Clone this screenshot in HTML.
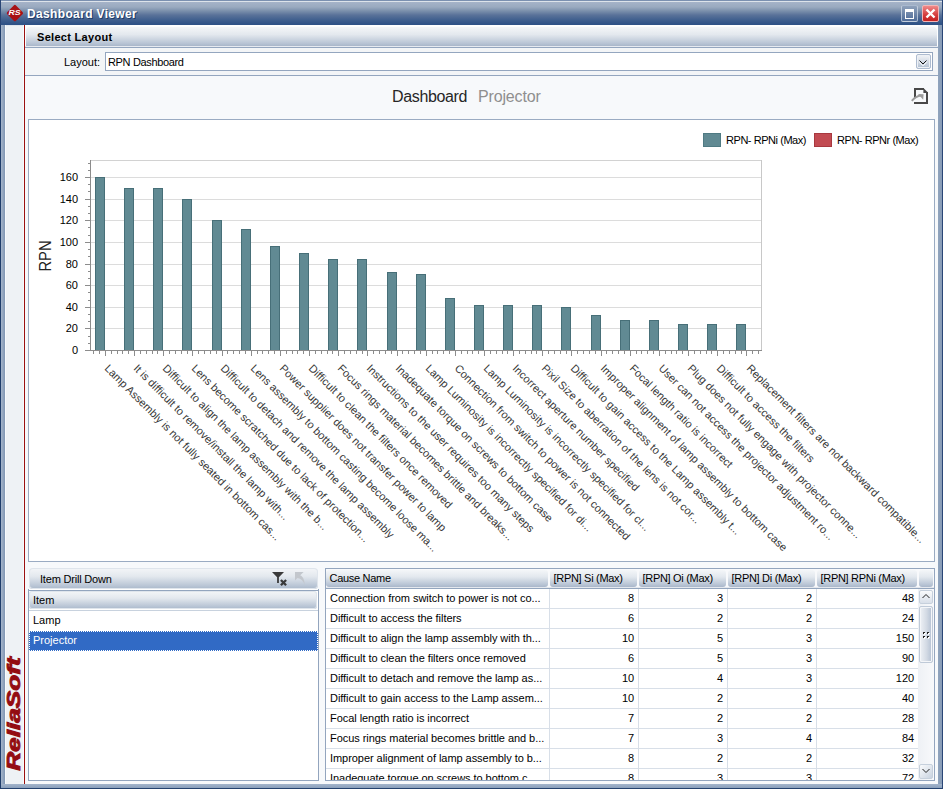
<!DOCTYPE html>
<html><head><meta charset="utf-8"><style>
html,body{margin:0;padding:0;}
body{width:943px;height:789px;position:relative;overflow:hidden;font-family:"Liberation Sans", sans-serif;}
.t{position:absolute;white-space:nowrap;font-size:11px;line-height:11px;color:#000;}
.lab{font-size:11px;line-height:13px;color:#383838;transform:rotate(45deg);transform-origin:0 0;}
</style></head><body>
<div style="position:absolute;left:0px;top:0px;width:943px;height:789px;background:#8ea2bd;"></div><div style="position:absolute;left:1px;top:0px;width:4px;height:789px;background:linear-gradient(90deg,#a6b6cb,#8096b3);"></div><div style="position:absolute;left:938px;top:0px;width:4px;height:789px;background:linear-gradient(90deg,#90a4bd,#889cb7);"></div><div style="position:absolute;left:0px;top:784px;width:943px;height:4px;background:linear-gradient(#a3b4ca,#8aa0bc);"></div><div style="position:absolute;left:0px;top:788px;width:943px;height:1px;background:#24426f;"></div><div style="position:absolute;left:0px;top:0px;width:1px;height:789px;background:#1f3d6b;"></div><div style="position:absolute;left:942px;top:0px;width:1px;height:789px;background:#2a4676;"></div><div style="position:absolute;left:0px;top:0px;width:943px;height:25px;background:linear-gradient(#7b90b0 0px,#7b90b0 1px,#dde3ea 1px,#dde3ea 2px,#a5b3c8 2px,#9aaac0 7px,#7a8fab 11px,#5a7299 15px,#3f5f8e 20px,#2f5286 24px);"></div><div style="position:absolute;left:0px;top:0px;width:1px;height:25px;background:#2a4676;"></div><div style="position:absolute;left:942px;top:0px;width:1px;height:25px;background:#2a4676;"></div><svg style="position:absolute;left:6px;top:4px" width="18" height="18" viewBox="0 0 18 18"><rect x="2.8" y="2.8" width="12.4" height="12.4" rx="1.6" fill="#a81215" transform="rotate(45 8.9 8.9)"/><text x="0" y="0" font-family="Liberation Sans" font-weight="bold" font-style="italic" font-size="6.6" fill="#fff" text-anchor="middle" transform="translate(8.6 11.3) scale(1.32 1)">RS</text></svg><div class="t" style="left:27px;top:7.84px;font-size:12px;line-height:12px;color:#fff;font-weight:bold;letter-spacing:0.35px;text-shadow:1px 1px 0 #203c68;">Dashboard Viewer</div><div style="position:absolute;left:901px;top:5px;width:15px;height:15px;border:1px solid rgba(230,236,244,0.6);border-radius:2px;background:linear-gradient(#8fa1bb,#4f6c98);"></div><div style="position:absolute;left:905px;top:9px;width:7px;height:6px;border:1px solid #fff;border-top-width:3px;"></div><div style="position:absolute;left:922px;top:5px;width:15px;height:15px;border:1px solid #f3b5b5;border-radius:2px;background:linear-gradient(#ee8a8a,#d43c3c 60%,#c42020);"></div><svg style="position:absolute;left:924px;top:7px" width="13" height="13" viewBox="0 0 13 13"><path d="M2.5 2.5 L10.5 10.5 M10.5 2.5 L2.5 10.5" stroke="#fff" stroke-width="2.4"/></svg><div style="position:absolute;left:5px;top:25px;width:19px;height:759px;background:#eef2f5;"></div><div style="position:absolute;left:5px;top:25px;width:19px;height:1px;background:#dfe6ee;"></div><div style="position:absolute;left:5px;top:25px;width:1px;height:759px;background:#f8fbfd;"></div><div style="position:absolute;left:23px;top:25px;width:1px;height:759px;background:#f8fbfd;"></div><div style="position:absolute;left:24px;top:25px;width:1px;height:759px;background:#9b1111;"></div><div class="t" style="left:-46px;top:704px;width:120px;height:20px;font-size:19px;line-height:20px;font-weight:bold;font-style:italic;color:#930c12;-webkit-text-stroke:0.9px #930c12;transform:rotate(-90deg) scale(1.38,1);transform-origin:60px 10px;text-align:center;letter-spacing:0px;">ReliaSoft</div><div style="position:absolute;left:25px;top:25px;width:913px;height:759px;background:#fdfeff;"></div><div style="position:absolute;left:26px;top:27px;width:911px;height:19px;border-radius:4px 4px 0 0;background:linear-gradient(#f4f6f8 0%,#e3e8ee 40%,#b9c5d5 85%,#a9b7ca 100%);"></div><div class="t" style="left:37px;top:31.69px;font-size:11px;line-height:11px;color:#000;font-weight:bold;letter-spacing:0.3px;">Select Layout</div><div style="position:absolute;left:25px;top:46px;width:913px;height:1px;background:#e6eaf0;"></div><div style="position:absolute;left:25px;top:47px;width:913px;height:1px;background:#94a6bf;"></div><div style="position:absolute;left:25px;top:48px;width:913px;height:27px;background:#f3f5f7;"></div><div style="position:absolute;left:25px;top:75px;width:913px;height:1px;background:#94a6bf;"></div><div class="t" style="left:64px;top:56.69px;font-size:11px;line-height:11px;color:#000;">Layout:</div><div style="position:absolute;left:105px;top:52px;width:826px;height:17px;border:1px solid #94a6bf;background:#fff;"></div><div class="t" style="left:108px;top:56.69px;font-size:11px;line-height:11px;color:#000;letter-spacing:-0.35px;">RPN Dashboard</div><div style="position:absolute;left:916px;top:54px;width:13px;height:13px;border:1px solid #aebcd0;border-radius:2px;box-shadow:inset 0 0 0 1px #eef1f5;background:linear-gradient(#f2f4f7,#d5dce6 50%,#b0bed0);"></div><svg style="position:absolute;left:918px;top:59px" width="10" height="8" viewBox="0 0 10 8"><path d="M1.5 2.5 L5 6 L8.5 2.5" stroke="#fff" stroke-width="1" fill="none" transform="translate(0,0.8)"/><path d="M1.5 1.5 L5 5 L8.5 1.5" stroke="#111" stroke-width="1" fill="none"/></svg><div style="position:absolute;left:25px;top:76px;width:913px;height:708px;background:#f7f9fb;"></div><div class="t" style="left:392px;top:88.66px;font-size:16px;line-height:16px;color:#262626;letter-spacing:-0.35px;">Dashboard</div><div class="t" style="left:478px;top:88.66px;font-size:16px;line-height:16px;color:#8f8f8f;letter-spacing:-0.15px;">Projector</div><svg style="position:absolute;left:906px;top:82px" width="28" height="26" viewBox="0 0 28 26" shape-rendering="crispEdges"><path d="M8 6h10v2h-10zM8 6h2v9.5h-2zM20 10h2v12h-2zM8 20h14v2h-14z" fill="#484848"/><path d="M17.4 6 L22 10.6 V11 H17.4 Z" fill="#484848" shape-rendering="auto"/><path d="M5.8 18.8 Q10 14.2 15 13.6" stroke="#9c9c9c" stroke-width="2" fill="none" shape-rendering="auto"/><path d="M12 12 L17.6 12.2 L17.2 17.8 Z" fill="#9c9c9c" shape-rendering="auto"/></svg><div style="position:absolute;left:28px;top:119px;width:905px;height:441px;border:1px solid #9aabc2;background:#fff;"></div><svg style="position:absolute;left:0;top:0" width="943" height="789" shape-rendering="crispEdges"><rect x="91" y="328" width="670" height="1" fill="#dcdcdc"/><rect x="91" y="307" width="670" height="1" fill="#dcdcdc"/><rect x="91" y="285" width="670" height="1" fill="#dcdcdc"/><rect x="91" y="264" width="670" height="1" fill="#dcdcdc"/><rect x="91" y="242" width="670" height="1" fill="#dcdcdc"/><rect x="91" y="220" width="670" height="1" fill="#dcdcdc"/><rect x="91" y="199" width="670" height="1" fill="#dcdcdc"/><rect x="91" y="177" width="670" height="1" fill="#dcdcdc"/><rect x="91" y="160" width="670" height="1" fill="#d2d2d2"/><rect x="761" y="160" width="1" height="190" fill="#c8c8c8"/><rect x="90" y="160" width="1" height="191" fill="#8c8c8c"/><rect x="85" y="350" width="677" height="1" fill="#8c8c8c"/><rect x="85" y="350" width="5" height="1" fill="#8c8c8c"/><rect x="85" y="328" width="5" height="1" fill="#8c8c8c"/><rect x="85" y="307" width="5" height="1" fill="#8c8c8c"/><rect x="85" y="285" width="5" height="1" fill="#8c8c8c"/><rect x="85" y="264" width="5" height="1" fill="#8c8c8c"/><rect x="85" y="242" width="5" height="1" fill="#8c8c8c"/><rect x="85" y="220" width="5" height="1" fill="#8c8c8c"/><rect x="85" y="199" width="5" height="1" fill="#8c8c8c"/><rect x="85" y="177" width="5" height="1" fill="#8c8c8c"/><rect x="88" y="343" width="2" height="1" fill="#8c8c8c"/><rect x="88" y="336" width="2" height="1" fill="#8c8c8c"/><rect x="88" y="321" width="2" height="1" fill="#8c8c8c"/><rect x="88" y="314" width="2" height="1" fill="#8c8c8c"/><rect x="88" y="300" width="2" height="1" fill="#8c8c8c"/><rect x="88" y="292" width="2" height="1" fill="#8c8c8c"/><rect x="88" y="278" width="2" height="1" fill="#8c8c8c"/><rect x="88" y="271" width="2" height="1" fill="#8c8c8c"/><rect x="88" y="256" width="2" height="1" fill="#8c8c8c"/><rect x="88" y="249" width="2" height="1" fill="#8c8c8c"/><rect x="88" y="235" width="2" height="1" fill="#8c8c8c"/><rect x="88" y="227" width="2" height="1" fill="#8c8c8c"/><rect x="88" y="213" width="2" height="1" fill="#8c8c8c"/><rect x="88" y="206" width="2" height="1" fill="#8c8c8c"/><rect x="88" y="191" width="2" height="1" fill="#8c8c8c"/><rect x="88" y="184" width="2" height="1" fill="#8c8c8c"/><rect x="88" y="170" width="2" height="1" fill="#8c8c8c"/><rect x="88" y="163" width="2" height="1" fill="#8c8c8c"/><rect x="105" y="351" width="1" height="5" fill="#8c8c8c"/><rect x="134" y="351" width="1" height="5" fill="#8c8c8c"/><rect x="163" y="351" width="1" height="5" fill="#8c8c8c"/><rect x="192" y="351" width="1" height="5" fill="#8c8c8c"/><rect x="222" y="351" width="1" height="5" fill="#8c8c8c"/><rect x="251" y="351" width="1" height="5" fill="#8c8c8c"/><rect x="280" y="351" width="1" height="5" fill="#8c8c8c"/><rect x="309" y="351" width="1" height="5" fill="#8c8c8c"/><rect x="338" y="351" width="1" height="5" fill="#8c8c8c"/><rect x="367" y="351" width="1" height="5" fill="#8c8c8c"/><rect x="397" y="351" width="1" height="5" fill="#8c8c8c"/><rect x="426" y="351" width="1" height="5" fill="#8c8c8c"/><rect x="455" y="351" width="1" height="5" fill="#8c8c8c"/><rect x="484" y="351" width="1" height="5" fill="#8c8c8c"/><rect x="513" y="351" width="1" height="5" fill="#8c8c8c"/><rect x="542" y="351" width="1" height="5" fill="#8c8c8c"/><rect x="571" y="351" width="1" height="5" fill="#8c8c8c"/><rect x="601" y="351" width="1" height="5" fill="#8c8c8c"/><rect x="630" y="351" width="1" height="5" fill="#8c8c8c"/><rect x="659" y="351" width="1" height="5" fill="#8c8c8c"/><rect x="688" y="351" width="1" height="5" fill="#8c8c8c"/><rect x="717" y="351" width="1" height="5" fill="#8c8c8c"/><rect x="746" y="351" width="1" height="5" fill="#8c8c8c"/><rect x="93" y="351" width="1" height="3" fill="#8c8c8c"/><rect x="99" y="351" width="1" height="3" fill="#8c8c8c"/><rect x="111" y="351" width="1" height="3" fill="#8c8c8c"/><rect x="117" y="351" width="1" height="3" fill="#8c8c8c"/><rect x="122" y="351" width="1" height="3" fill="#8c8c8c"/><rect x="128" y="351" width="1" height="3" fill="#8c8c8c"/><rect x="140" y="351" width="1" height="3" fill="#8c8c8c"/><rect x="146" y="351" width="1" height="3" fill="#8c8c8c"/><rect x="152" y="351" width="1" height="3" fill="#8c8c8c"/><rect x="157" y="351" width="1" height="3" fill="#8c8c8c"/><rect x="169" y="351" width="1" height="3" fill="#8c8c8c"/><rect x="175" y="351" width="1" height="3" fill="#8c8c8c"/><rect x="181" y="351" width="1" height="3" fill="#8c8c8c"/><rect x="187" y="351" width="1" height="3" fill="#8c8c8c"/><rect x="198" y="351" width="1" height="3" fill="#8c8c8c"/><rect x="204" y="351" width="1" height="3" fill="#8c8c8c"/><rect x="210" y="351" width="1" height="3" fill="#8c8c8c"/><rect x="216" y="351" width="1" height="3" fill="#8c8c8c"/><rect x="227" y="351" width="1" height="3" fill="#8c8c8c"/><rect x="233" y="351" width="1" height="3" fill="#8c8c8c"/><rect x="239" y="351" width="1" height="3" fill="#8c8c8c"/><rect x="245" y="351" width="1" height="3" fill="#8c8c8c"/><rect x="257" y="351" width="1" height="3" fill="#8c8c8c"/><rect x="262" y="351" width="1" height="3" fill="#8c8c8c"/><rect x="268" y="351" width="1" height="3" fill="#8c8c8c"/><rect x="274" y="351" width="1" height="3" fill="#8c8c8c"/><rect x="286" y="351" width="1" height="3" fill="#8c8c8c"/><rect x="292" y="351" width="1" height="3" fill="#8c8c8c"/><rect x="297" y="351" width="1" height="3" fill="#8c8c8c"/><rect x="303" y="351" width="1" height="3" fill="#8c8c8c"/><rect x="315" y="351" width="1" height="3" fill="#8c8c8c"/><rect x="321" y="351" width="1" height="3" fill="#8c8c8c"/><rect x="327" y="351" width="1" height="3" fill="#8c8c8c"/><rect x="332" y="351" width="1" height="3" fill="#8c8c8c"/><rect x="344" y="351" width="1" height="3" fill="#8c8c8c"/><rect x="350" y="351" width="1" height="3" fill="#8c8c8c"/><rect x="356" y="351" width="1" height="3" fill="#8c8c8c"/><rect x="362" y="351" width="1" height="3" fill="#8c8c8c"/><rect x="373" y="351" width="1" height="3" fill="#8c8c8c"/><rect x="379" y="351" width="1" height="3" fill="#8c8c8c"/><rect x="385" y="351" width="1" height="3" fill="#8c8c8c"/><rect x="391" y="351" width="1" height="3" fill="#8c8c8c"/><rect x="402" y="351" width="1" height="3" fill="#8c8c8c"/><rect x="408" y="351" width="1" height="3" fill="#8c8c8c"/><rect x="414" y="351" width="1" height="3" fill="#8c8c8c"/><rect x="420" y="351" width="1" height="3" fill="#8c8c8c"/><rect x="432" y="351" width="1" height="3" fill="#8c8c8c"/><rect x="437" y="351" width="1" height="3" fill="#8c8c8c"/><rect x="443" y="351" width="1" height="3" fill="#8c8c8c"/><rect x="449" y="351" width="1" height="3" fill="#8c8c8c"/><rect x="461" y="351" width="1" height="3" fill="#8c8c8c"/><rect x="467" y="351" width="1" height="3" fill="#8c8c8c"/><rect x="472" y="351" width="1" height="3" fill="#8c8c8c"/><rect x="478" y="351" width="1" height="3" fill="#8c8c8c"/><rect x="490" y="351" width="1" height="3" fill="#8c8c8c"/><rect x="496" y="351" width="1" height="3" fill="#8c8c8c"/><rect x="502" y="351" width="1" height="3" fill="#8c8c8c"/><rect x="507" y="351" width="1" height="3" fill="#8c8c8c"/><rect x="519" y="351" width="1" height="3" fill="#8c8c8c"/><rect x="525" y="351" width="1" height="3" fill="#8c8c8c"/><rect x="531" y="351" width="1" height="3" fill="#8c8c8c"/><rect x="536" y="351" width="1" height="3" fill="#8c8c8c"/><rect x="548" y="351" width="1" height="3" fill="#8c8c8c"/><rect x="554" y="351" width="1" height="3" fill="#8c8c8c"/><rect x="560" y="351" width="1" height="3" fill="#8c8c8c"/><rect x="566" y="351" width="1" height="3" fill="#8c8c8c"/><rect x="577" y="351" width="1" height="3" fill="#8c8c8c"/><rect x="583" y="351" width="1" height="3" fill="#8c8c8c"/><rect x="589" y="351" width="1" height="3" fill="#8c8c8c"/><rect x="595" y="351" width="1" height="3" fill="#8c8c8c"/><rect x="606" y="351" width="1" height="3" fill="#8c8c8c"/><rect x="612" y="351" width="1" height="3" fill="#8c8c8c"/><rect x="618" y="351" width="1" height="3" fill="#8c8c8c"/><rect x="624" y="351" width="1" height="3" fill="#8c8c8c"/><rect x="636" y="351" width="1" height="3" fill="#8c8c8c"/><rect x="641" y="351" width="1" height="3" fill="#8c8c8c"/><rect x="647" y="351" width="1" height="3" fill="#8c8c8c"/><rect x="653" y="351" width="1" height="3" fill="#8c8c8c"/><rect x="665" y="351" width="1" height="3" fill="#8c8c8c"/><rect x="671" y="351" width="1" height="3" fill="#8c8c8c"/><rect x="676" y="351" width="1" height="3" fill="#8c8c8c"/><rect x="682" y="351" width="1" height="3" fill="#8c8c8c"/><rect x="694" y="351" width="1" height="3" fill="#8c8c8c"/><rect x="700" y="351" width="1" height="3" fill="#8c8c8c"/><rect x="706" y="351" width="1" height="3" fill="#8c8c8c"/><rect x="711" y="351" width="1" height="3" fill="#8c8c8c"/><rect x="723" y="351" width="1" height="3" fill="#8c8c8c"/><rect x="729" y="351" width="1" height="3" fill="#8c8c8c"/><rect x="735" y="351" width="1" height="3" fill="#8c8c8c"/><rect x="741" y="351" width="1" height="3" fill="#8c8c8c"/><rect x="752" y="351" width="1" height="3" fill="#8c8c8c"/><rect x="758" y="351" width="1" height="3" fill="#8c8c8c"/><rect x="95" y="177" width="10" height="173" fill="#476f78"/><rect x="96" y="178" width="8" height="172" fill="#618a93"/><rect x="124" y="188" width="10" height="162" fill="#476f78"/><rect x="125" y="189" width="8" height="161" fill="#618a93"/><rect x="153" y="188" width="10" height="162" fill="#476f78"/><rect x="154" y="189" width="8" height="161" fill="#618a93"/><rect x="182" y="199" width="10" height="151" fill="#476f78"/><rect x="183" y="200" width="8" height="150" fill="#618a93"/><rect x="212" y="220" width="10" height="130" fill="#476f78"/><rect x="213" y="221" width="8" height="129" fill="#618a93"/><rect x="241" y="229" width="10" height="121" fill="#476f78"/><rect x="242" y="230" width="8" height="120" fill="#618a93"/><rect x="270" y="246" width="10" height="104" fill="#476f78"/><rect x="271" y="247" width="8" height="103" fill="#618a93"/><rect x="299" y="253" width="10" height="97" fill="#476f78"/><rect x="300" y="254" width="8" height="96" fill="#618a93"/><rect x="328" y="259" width="10" height="91" fill="#476f78"/><rect x="329" y="260" width="8" height="90" fill="#618a93"/><rect x="357" y="259" width="10" height="91" fill="#476f78"/><rect x="358" y="260" width="8" height="90" fill="#618a93"/><rect x="387" y="272" width="10" height="78" fill="#476f78"/><rect x="388" y="273" width="8" height="77" fill="#618a93"/><rect x="416" y="274" width="10" height="76" fill="#476f78"/><rect x="417" y="275" width="8" height="75" fill="#618a93"/><rect x="445" y="298" width="10" height="52" fill="#476f78"/><rect x="446" y="299" width="8" height="51" fill="#618a93"/><rect x="474" y="305" width="10" height="45" fill="#476f78"/><rect x="475" y="306" width="8" height="44" fill="#618a93"/><rect x="503" y="305" width="10" height="45" fill="#476f78"/><rect x="504" y="306" width="8" height="44" fill="#618a93"/><rect x="532" y="305" width="10" height="45" fill="#476f78"/><rect x="533" y="306" width="8" height="44" fill="#618a93"/><rect x="561" y="307" width="10" height="43" fill="#476f78"/><rect x="562" y="308" width="8" height="42" fill="#618a93"/><rect x="591" y="315" width="10" height="35" fill="#476f78"/><rect x="592" y="316" width="8" height="34" fill="#618a93"/><rect x="620" y="320" width="10" height="30" fill="#476f78"/><rect x="621" y="321" width="8" height="29" fill="#618a93"/><rect x="649" y="320" width="10" height="30" fill="#476f78"/><rect x="650" y="321" width="8" height="29" fill="#618a93"/><rect x="678" y="324" width="10" height="26" fill="#476f78"/><rect x="679" y="325" width="8" height="25" fill="#618a93"/><rect x="707" y="324" width="10" height="26" fill="#476f78"/><rect x="708" y="325" width="8" height="25" fill="#618a93"/><rect x="736" y="324" width="10" height="26" fill="#476f78"/><rect x="737" y="325" width="8" height="25" fill="#618a93"/></svg><div class="t" style="left:40px;width:38px;text-align:right;top:343.5px;font-size:11px;line-height:13px;">0</div><div class="t" style="left:40px;width:38px;text-align:right;top:321.5px;font-size:11px;line-height:13px;">20</div><div class="t" style="left:40px;width:38px;text-align:right;top:300.5px;font-size:11px;line-height:13px;">40</div><div class="t" style="left:40px;width:38px;text-align:right;top:278.5px;font-size:11px;line-height:13px;">60</div><div class="t" style="left:40px;width:38px;text-align:right;top:257.5px;font-size:11px;line-height:13px;">80</div><div class="t" style="left:40px;width:38px;text-align:right;top:235.5px;font-size:11px;line-height:13px;">100</div><div class="t" style="left:40px;width:38px;text-align:right;top:213.5px;font-size:11px;line-height:13px;">120</div><div class="t" style="left:40px;width:38px;text-align:right;top:192.5px;font-size:11px;line-height:13px;">140</div><div class="t" style="left:40px;width:38px;text-align:right;top:170.5px;font-size:11px;line-height:13px;">160</div><div class="t" style="left:15px;top:247.5px;width:60px;text-align:center;font-size:16.5px;line-height:16px;color:#222;transform:rotate(-90deg) scale(0.89,1);transform-origin:30px 8px;">RPN</div><div style="position:absolute;left:703px;top:133px;width:18px;height:14px;background:#618a93;box-shadow:inset 0 0 0 1px #4f7a83;"></div><div class="t" style="left:726px;top:134.99px;font-size:11px;line-height:11px;color:#000;letter-spacing:-0.45px;">RPN- RPNi (Max)</div><div style="position:absolute;left:814px;top:133px;width:18px;height:14px;background:#c24b52;box-shadow:inset 0 0 0 1px #a8383f;"></div><div class="t" style="left:837px;top:134.99px;font-size:11px;line-height:11px;color:#000;letter-spacing:-0.45px;">RPN- RPNr (Max)</div><div class="t lab" style="left:110.69px;top:361.7px;">Lamp Assembly is not fully seated in bottom cas...</div><div class="t lab" style="left:139.86px;top:361.7px;">It is difficult to remove/install the lamp with...</div><div class="t lab" style="left:169.03px;top:361.7px;">Difficult to align the lamp assembly with the b...</div><div class="t lab" style="left:198.21px;top:361.7px;">Lens become scratched due to lack of protection...</div><div class="t lab" style="left:227.38px;top:361.7px;">Difficult to detach and remove the lamp assembly</div><div class="t lab" style="left:256.56px;top:361.7px;">Lens assembly to bottom casting become loose ma...</div><div class="t lab" style="left:285.73px;top:361.7px;">Power supplier does not transfer power to lamp</div><div class="t lab" style="left:314.90px;top:361.7px;">Difficult to clean the filters once removed</div><div class="t lab" style="left:344.08px;top:361.7px;">Focus rings material becomes brittle and breaks...</div><div class="t lab" style="left:373.25px;top:361.7px;">Instructions to the user requires too many steps</div><div class="t lab" style="left:402.43px;top:361.7px;">Inadequate torque on screws to bottom case</div><div class="t lab" style="left:431.60px;top:361.7px;">Lamp Luminosity is incorrectly specified for di...</div><div class="t lab" style="left:460.77px;top:361.7px;">Connection from switch to power is not connected</div><div class="t lab" style="left:489.95px;top:361.7px;">Lamp Luminosity is incorrectly specified for cl...</div><div class="t lab" style="left:519.12px;top:361.7px;">Incorrect aperture number specified</div><div class="t lab" style="left:548.30px;top:361.7px;">Pixil Size to aberration of the lens is not cor...</div><div class="t lab" style="left:577.47px;top:361.7px;">Difficult to gain access to the Lamp assembly t...</div><div class="t lab" style="left:606.64px;top:361.7px;">Improper alignment of lamp assembly to bottom case</div><div class="t lab" style="left:635.82px;top:361.7px;">Focal length ratio is incorrect</div><div class="t lab" style="left:664.99px;top:361.7px;">User can not access the projector adjustment ro...</div><div class="t lab" style="left:694.17px;top:361.7px;">Plug does not fully engage with projector conne...</div><div class="t lab" style="left:723.34px;top:361.7px;">Difficult to access the filters</div><div class="t lab" style="left:752.51px;top:361.7px;">Replacement filters are not backward compatible...</div><div style="position:absolute;left:28px;top:568px;width:289px;height:212px;border:1px solid #93a5be;border-top:none;background:#fff;"></div><div style="position:absolute;left:28px;top:568px;width:291px;height:21px;background:#f7f9fb;"></div><div style="position:absolute;left:29px;top:568px;width:289px;height:21px;border-radius:4px;box-shadow:inset 0 0 0 1px #dfe5ec;background:linear-gradient(#f4f6f8 0%,#e3e8ee 40%,#b9c5d5 85%,#a9b7ca 100%);"></div><div style="position:absolute;left:28px;top:590px;width:291px;height:1px;background:#93a5be;"></div><div class="t" style="left:40px;top:573.69px;font-size:11px;line-height:11px;color:#000;letter-spacing:-0.2px;">Item Drill Down</div><svg style="position:absolute;left:270px;top:570px" width="20" height="18" viewBox="0 0 20 18"><path d="M2 2 H14 L8.9 7.2 V13 H7.1 V7.2 Z" fill="#3a3a3a"/><path d="M10.9 10 L16.1 15.3 M16.1 10 L10.9 15.3" stroke="#3a3a3a" stroke-width="2.3"/></svg><svg style="position:absolute;left:293px;top:570px" width="14" height="18" viewBox="0 0 14 18"><path d="M2 2 L10.6 2 L2 10.6 Z" fill="#c3c7cd"/><path d="M5.5 4.5 Q11.8 6 11.8 15.8 Q10.5 9 4 8 Z" fill="#c3c7cd"/></svg><div style="position:absolute;left:29px;top:591px;width:288px;height:18px;border-radius:3px;box-shadow:inset 0 0 0 1px #dfe5ec;background:linear-gradient(#f4f6f8 0%,#e3e8ee 40%,#b9c5d5 85%,#a9b7ca 100%);"></div><div style="position:absolute;left:29px;top:610px;width:289px;height:1px;background:#c8d2de;"></div><div class="t" style="left:33px;top:594.99px;font-size:11px;line-height:11px;color:#000;">Item</div><div class="t" style="left:33px;top:614.89px;font-size:11px;line-height:11px;color:#000;">Lamp</div><div style="position:absolute;left:29px;top:631px;width:289px;height:20px;background:#316ac5;"></div><div style="position:absolute;left:29px;top:631px;width:287px;height:18px;border:1px dotted #fff;"></div><div class="t" style="left:33px;top:634.79px;font-size:11px;line-height:11px;color:#fff;">Projector</div><div style="position:absolute;left:325px;top:568px;width:608px;height:211px;border:1px solid #93a5be;background:#fff;"></div><div style="position:absolute;left:326px;top:569px;width:608px;height:20px;background:#f8f9fb;"></div><div style="position:absolute;left:326px;top:570px;width:222px;height:17px;border-radius:3px;background:linear-gradient(#f4f6f8 0%,#e3e8ee 40%,#b9c5d5 85%,#a9b7ca 100%);"></div><div class="t" style="left:329.5px;top:572.89px;font-size:11px;line-height:11px;color:#000;letter-spacing:-0.3px;">Cause Name</div><div style="position:absolute;left:550px;top:570px;width:87px;height:17px;border-radius:3px;background:linear-gradient(#f4f6f8 0%,#e3e8ee 40%,#b9c5d5 85%,#a9b7ca 100%);"></div><div class="t" style="left:553.5px;top:572.89px;font-size:11px;line-height:11px;color:#000;letter-spacing:-0.3px;">[RPN] Si (Max)</div><div style="position:absolute;left:639px;top:570px;width:87px;height:17px;border-radius:3px;background:linear-gradient(#f4f6f8 0%,#e3e8ee 40%,#b9c5d5 85%,#a9b7ca 100%);"></div><div class="t" style="left:642.5px;top:572.89px;font-size:11px;line-height:11px;color:#000;letter-spacing:-0.3px;">[RPN] Oi (Max)</div><div style="position:absolute;left:728px;top:570px;width:87px;height:17px;border-radius:3px;background:linear-gradient(#f4f6f8 0%,#e3e8ee 40%,#b9c5d5 85%,#a9b7ca 100%);"></div><div class="t" style="left:731.5px;top:572.89px;font-size:11px;line-height:11px;color:#000;letter-spacing:-0.3px;">[RPN] Di (Max)</div><div style="position:absolute;left:817px;top:570px;width:100px;height:17px;border-radius:3px;background:linear-gradient(#f4f6f8 0%,#e3e8ee 40%,#b9c5d5 85%,#a9b7ca 100%);"></div><div class="t" style="left:820.5px;top:572.89px;font-size:11px;line-height:11px;color:#000;letter-spacing:-0.3px;">[RPN] RPNi (Max)</div><div style="position:absolute;left:919px;top:570px;width:14px;height:17px;border-radius:3px;background:linear-gradient(#f4f6f8 0%,#e3e8ee 40%,#b9c5d5 85%,#a9b7ca 100%);"></div><div style="position:absolute;left:326px;top:588px;width:608px;height:1px;background:#94a6be;"></div><div style="position:absolute;left:326px;top:587px;width:608px;height:1px;background:#e4e8ee;"></div><div style="position:absolute;left:326px;top:608px;width:592px;height:1px;background:#d8dfe8;"></div><div style="position:absolute;left:326px;top:628px;width:592px;height:1px;background:#d8dfe8;"></div><div style="position:absolute;left:326px;top:648px;width:592px;height:1px;background:#d8dfe8;"></div><div style="position:absolute;left:326px;top:668px;width:592px;height:1px;background:#d8dfe8;"></div><div style="position:absolute;left:326px;top:688px;width:592px;height:1px;background:#d8dfe8;"></div><div style="position:absolute;left:326px;top:708px;width:592px;height:1px;background:#d8dfe8;"></div><div style="position:absolute;left:326px;top:728px;width:592px;height:1px;background:#d8dfe8;"></div><div style="position:absolute;left:326px;top:748px;width:592px;height:1px;background:#d8dfe8;"></div><div style="position:absolute;left:326px;top:768px;width:592px;height:1px;background:#d8dfe8;"></div><div style="position:absolute;left:549px;top:589px;width:1px;height:191px;background:#d8dfe8;"></div><div style="position:absolute;left:638px;top:589px;width:1px;height:191px;background:#d8dfe8;"></div><div style="position:absolute;left:727px;top:589px;width:1px;height:191px;background:#d8dfe8;"></div><div style="position:absolute;left:816px;top:589px;width:1px;height:191px;background:#d8dfe8;"></div><div style="position:absolute;left:326px;top:589px;width:592px;height:191px;overflow:hidden;"><div class="t" style="left:4px;top:4.09px;font-size:11px;line-height:11px;letter-spacing:-0.05px;">Connection from switch to power is not co...</div><div class="t" style="left:223px;width:85.20000000000005px;text-align:right;top:4.09px;font-size:11px;line-height:11px;">8</div><div class="t" style="left:312px;width:85.20000000000005px;text-align:right;top:4.09px;font-size:11px;line-height:11px;">3</div><div class="t" style="left:401px;width:85.20000000000005px;text-align:right;top:4.09px;font-size:11px;line-height:11px;">2</div><div class="t" style="left:490px;width:98.20000000000005px;text-align:right;top:4.09px;font-size:11px;line-height:11px;">48</div><div class="t" style="left:4px;top:24.09px;font-size:11px;line-height:11px;letter-spacing:-0.05px;">Difficult to access the filters</div><div class="t" style="left:223px;width:85.20000000000005px;text-align:right;top:24.09px;font-size:11px;line-height:11px;">6</div><div class="t" style="left:312px;width:85.20000000000005px;text-align:right;top:24.09px;font-size:11px;line-height:11px;">2</div><div class="t" style="left:401px;width:85.20000000000005px;text-align:right;top:24.09px;font-size:11px;line-height:11px;">2</div><div class="t" style="left:490px;width:98.20000000000005px;text-align:right;top:24.09px;font-size:11px;line-height:11px;">24</div><div class="t" style="left:4px;top:44.09px;font-size:11px;line-height:11px;letter-spacing:-0.05px;">Difficult to align the lamp assembly with th...</div><div class="t" style="left:223px;width:85.20000000000005px;text-align:right;top:44.09px;font-size:11px;line-height:11px;">10</div><div class="t" style="left:312px;width:85.20000000000005px;text-align:right;top:44.09px;font-size:11px;line-height:11px;">5</div><div class="t" style="left:401px;width:85.20000000000005px;text-align:right;top:44.09px;font-size:11px;line-height:11px;">3</div><div class="t" style="left:490px;width:98.20000000000005px;text-align:right;top:44.09px;font-size:11px;line-height:11px;">150</div><div class="t" style="left:4px;top:64.09px;font-size:11px;line-height:11px;letter-spacing:-0.05px;">Difficult to clean the filters once removed</div><div class="t" style="left:223px;width:85.20000000000005px;text-align:right;top:64.09px;font-size:11px;line-height:11px;">6</div><div class="t" style="left:312px;width:85.20000000000005px;text-align:right;top:64.09px;font-size:11px;line-height:11px;">5</div><div class="t" style="left:401px;width:85.20000000000005px;text-align:right;top:64.09px;font-size:11px;line-height:11px;">3</div><div class="t" style="left:490px;width:98.20000000000005px;text-align:right;top:64.09px;font-size:11px;line-height:11px;">90</div><div class="t" style="left:4px;top:84.09px;font-size:11px;line-height:11px;letter-spacing:-0.05px;">Difficult to detach and remove the lamp as...</div><div class="t" style="left:223px;width:85.20000000000005px;text-align:right;top:84.09px;font-size:11px;line-height:11px;">10</div><div class="t" style="left:312px;width:85.20000000000005px;text-align:right;top:84.09px;font-size:11px;line-height:11px;">4</div><div class="t" style="left:401px;width:85.20000000000005px;text-align:right;top:84.09px;font-size:11px;line-height:11px;">3</div><div class="t" style="left:490px;width:98.20000000000005px;text-align:right;top:84.09px;font-size:11px;line-height:11px;">120</div><div class="t" style="left:4px;top:104.09px;font-size:11px;line-height:11px;letter-spacing:-0.05px;">Difficult to gain access to the Lamp assem...</div><div class="t" style="left:223px;width:85.20000000000005px;text-align:right;top:104.09px;font-size:11px;line-height:11px;">10</div><div class="t" style="left:312px;width:85.20000000000005px;text-align:right;top:104.09px;font-size:11px;line-height:11px;">2</div><div class="t" style="left:401px;width:85.20000000000005px;text-align:right;top:104.09px;font-size:11px;line-height:11px;">2</div><div class="t" style="left:490px;width:98.20000000000005px;text-align:right;top:104.09px;font-size:11px;line-height:11px;">40</div><div class="t" style="left:4px;top:124.09px;font-size:11px;line-height:11px;letter-spacing:-0.05px;">Focal length ratio is incorrect</div><div class="t" style="left:223px;width:85.20000000000005px;text-align:right;top:124.09px;font-size:11px;line-height:11px;">7</div><div class="t" style="left:312px;width:85.20000000000005px;text-align:right;top:124.09px;font-size:11px;line-height:11px;">2</div><div class="t" style="left:401px;width:85.20000000000005px;text-align:right;top:124.09px;font-size:11px;line-height:11px;">2</div><div class="t" style="left:490px;width:98.20000000000005px;text-align:right;top:124.09px;font-size:11px;line-height:11px;">28</div><div class="t" style="left:4px;top:144.09px;font-size:11px;line-height:11px;letter-spacing:-0.05px;">Focus rings material becomes brittle and b...</div><div class="t" style="left:223px;width:85.20000000000005px;text-align:right;top:144.09px;font-size:11px;line-height:11px;">7</div><div class="t" style="left:312px;width:85.20000000000005px;text-align:right;top:144.09px;font-size:11px;line-height:11px;">3</div><div class="t" style="left:401px;width:85.20000000000005px;text-align:right;top:144.09px;font-size:11px;line-height:11px;">4</div><div class="t" style="left:490px;width:98.20000000000005px;text-align:right;top:144.09px;font-size:11px;line-height:11px;">84</div><div class="t" style="left:4px;top:164.09px;font-size:11px;line-height:11px;letter-spacing:-0.05px;">Improper alignment of lamp assembly to b...</div><div class="t" style="left:223px;width:85.20000000000005px;text-align:right;top:164.09px;font-size:11px;line-height:11px;">8</div><div class="t" style="left:312px;width:85.20000000000005px;text-align:right;top:164.09px;font-size:11px;line-height:11px;">2</div><div class="t" style="left:401px;width:85.20000000000005px;text-align:right;top:164.09px;font-size:11px;line-height:11px;">2</div><div class="t" style="left:490px;width:98.20000000000005px;text-align:right;top:164.09px;font-size:11px;line-height:11px;">32</div><div class="t" style="left:4px;top:184.09px;font-size:11px;line-height:11px;letter-spacing:-0.05px;">Inadequate torque on screws to bottom c...</div><div class="t" style="left:223px;width:85.20000000000005px;text-align:right;top:184.09px;font-size:11px;line-height:11px;">8</div><div class="t" style="left:312px;width:85.20000000000005px;text-align:right;top:184.09px;font-size:11px;line-height:11px;">3</div><div class="t" style="left:401px;width:85.20000000000005px;text-align:right;top:184.09px;font-size:11px;line-height:11px;">3</div><div class="t" style="left:490px;width:98.20000000000005px;text-align:right;top:184.09px;font-size:11px;line-height:11px;">72</div></div><div style="position:absolute;left:918px;top:589px;width:16px;height:191px;background:linear-gradient(90deg,#eef1f5,#f8f9fb);"></div><div style="position:absolute;left:919px;top:590px;width:12px;height:12px;border:1px solid #c6d0dc;border-radius:2px;background:linear-gradient(#fafbfc,#d9e0ea);"></div><svg style="position:absolute;left:920px;top:592px" width="12" height="10"><path d="M2.5 6 L6 2.5 L9.5 6" stroke="#222" stroke-width="1" fill="none"/></svg><div style="position:absolute;left:919px;top:606px;width:12px;height:55px;border:1px solid #bfcad8;border-radius:2px;box-shadow:inset 0 0 0 1px #f4f6f9;background:linear-gradient(90deg,#eef1f5,#d3dae4 55%,#b3c0d2);"></div><svg style="position:absolute;left:922px;top:631px" width="8" height="8" shape-rendering="crispEdges"><path d="M2 2h2v1h-1v1h-1zM6 2h2v1h-1v1h-1zM2 6h2v1h-1v1h-1zM6 6h2v1h-1v1h-1z" fill="#fff"/><path d="M1 1h2v1h-1v1h-1zM5 1h2v1h-1v1h-1zM1 5h2v1h-1v1h-1zM5 5h2v1h-1v1h-1z" fill="#222"/></svg><div style="position:absolute;left:919px;top:764px;width:12px;height:13px;border:1px solid #c6d0dc;border-radius:2px;background:linear-gradient(135deg,#fafbfc,#c9d3e0);"></div><svg style="position:absolute;left:920px;top:766px" width="12" height="10"><path d="M2.5 3 L6 6.5 L9.5 3" stroke="#222" stroke-width="1" fill="none"/></svg>
</body></html>
